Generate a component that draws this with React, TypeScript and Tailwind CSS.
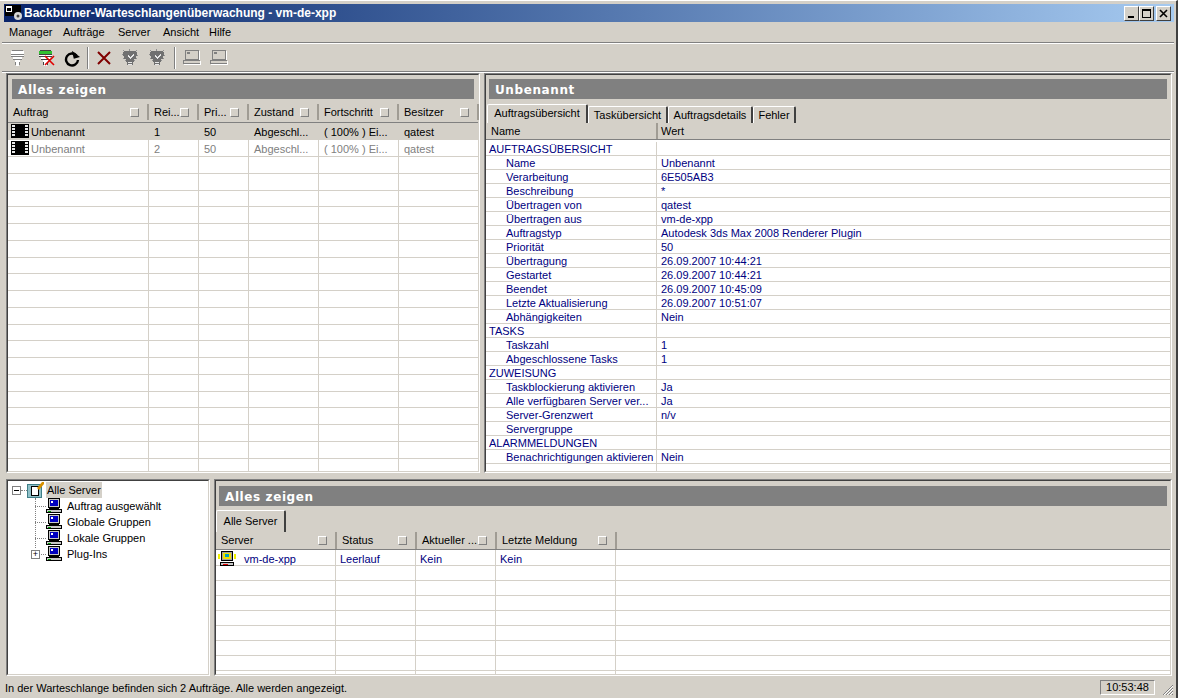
const font = "font-['Liberation_Sans',Arial,sans-serif]";

const menus = ["Manager", "Aufträge", "Server", "Ansicht", "Hilfe"];

const jobColumns = [
  { label: "Auftrag", width: "w-[141px]" },
  { label: "Rei...", width: "w-[50px]" },
  { label: "Pri...", width: "w-[50px]" },
  { label: "Zustand", width: "w-[70px]" },
  { label: "Fortschritt", width: "w-[80px]" },
  { label: "Besitzer", width: "w-[80px]" },
];

const jobs = [
  { cells: ["Unbenannt", "1", "50", "Abgeschl...", "( 100% ) Ei...", "qatest"], active: true },
  { cells: ["Unbenannt", "2", "50", "Abgeschl...", "( 100% ) Ei...", "qatest"], active: false },
];

const detailRows: [string, string, boolean][] = [
  ["AUFTRAGSÜBERSICHT", "", true],
  ["Name", "Unbenannt", false],
  ["Verarbeitung", "6E505AB3", false],
  ["Beschreibung", "*", false],
  ["Übertragen von", "qatest", false],
  ["Übertragen aus", "vm-de-xpp", false],
  ["Auftragstyp", "Autodesk 3ds Max 2008 Renderer Plugin", false],
  ["Priorität", "50", false],
  ["Übertragung", "26.09.2007 10:44:21", false],
  ["Gestartet", "26.09.2007 10:44:21", false],
  ["Beendet", "26.09.2007 10:45:09", false],
  ["Letzte Aktualisierung", "26.09.2007 10:51:07", false],
  ["Abhängigkeiten", "Nein", false],
  ["TASKS", "", true],
  ["Taskzahl", "1", false],
  ["Abgeschlossene Tasks", "1", false],
  ["ZUWEISUNG", "", true],
  ["Taskblockierung aktivieren", "Ja", false],
  ["Alle verfügbaren Server ver...", "Ja", false],
  ["Server-Grenzwert", "n/v", false],
  ["Servergruppe", "", false],
  ["ALARMMELDUNGEN", "", true],
  ["Benachrichtigungen aktivieren", "Nein", false],
  ["", "", false],
];

const serverColumns = [
  { label: "Server", width: "w-[121px]" },
  { label: "Status", width: "w-[80px]" },
  { label: "Aktueller ...", width: "w-[80px]" },
  { label: "Letzte Meldung", width: "w-[120px]" },
];

function FilmIcon() {
  return (
    <svg width="18" height="14" viewBox="0 0 18 14" shapeRendering="crispEdges" className="shrink-0">
      <rect width="18" height="14" fill="#000" />
      {[1, 4, 7, 10].map((y) => (
        <g key={y} fill="#e8e8e8">
          <rect x="1" y={y} width="3" height="2" />
          <rect x="14" y={y} width="3" height="2" />
        </g>
      ))}
    </svg>
  );
}

function ComputerIcon({ screen = "#0000c0", body = "#c8c8c8" }: { screen?: string; body?: string }) {
  return (
    <svg width="16" height="16" viewBox="0 0 16 16" shapeRendering="crispEdges" className="shrink-0">
      <rect x="2" y="0" width="12" height="10" fill="#000" />
      <rect x="3" y="1" width="10" height="8" fill={body} />
      <rect x="4" y="2" width="8" height="6" fill={screen} />
      <rect x="5" y="3" width="2" height="2" fill="#fff" />
      <rect x="3" y="10" width="10" height="1" fill="#000" />
      <rect x="0" y="11" width="16" height="4" fill="#000" />
      <rect x="1" y="12" width="14" height="2" fill={body} />
      <rect x="2" y="13" width="3" height="1" fill="#00a000" />
    </svg>
  );
}

function ServerIcon() {
  return (
    <svg width="18" height="15" viewBox="0 0 18 15" shapeRendering="crispEdges" className="shrink-0 mt-[2px]">
      <rect x="0" y="3" width="2" height="5" fill="#f0f000" />
      <rect x="16" y="3" width="2" height="5" fill="#f0f000" />
      <rect x="3" y="0" width="12" height="10" fill="#000" />
      <rect x="4" y="1" width="10" height="8" fill="#a0a0a0" />
      <rect x="5" y="2" width="8" height="6" fill="#f0e000" />
      <rect x="7" y="3" width="4" height="3" fill="#00a0c0" />
      <rect x="2" y="11" width="14" height="4" fill="#000" />
      <rect x="3" y="12" width="12" height="2" fill="#c8c8c8" />
      <rect x="5" y="13" width="5" height="1" fill="#e00000" />
    </svg>
  );
}

function FunnelIcon({ active }: { active?: boolean }) {
  const dark = active ? "#404040" : "#808080";
  return (
    <svg width="18" height="18" viewBox="0 0 18 18" shapeRendering="crispEdges">
      <rect x="3" y="1" width="11" height="1" fill={dark} />
      <rect x="2" y="2" width="13" height="3" fill={active ? "#30c030" : "#fff"} />
      <rect x="2" y="5" width="13" height="1" fill={dark} />
      <rect x="2" y="6" width="13" height="1" fill="#fff" />
      <rect x="2" y="7" width="13" height="1" fill={dark} />
      <rect x="4" y="8" width="9" height="2" fill="#fff" />
      <rect x="4" y="10" width="9" height="1" fill={dark} />
      <rect x="6" y="11" width="5" height="2" fill="#fff" />
      <rect x="7" y="13" width="3" height="4" fill="#fff" />
      <rect x="6" y="13" width="1" height="3" fill={dark} />
      <rect x="10" y="13" width="1" height="3" fill={dark} />
      {active && <path d="M8 7l9 9M17 7l-9 9" stroke="#e00000" strokeWidth="1.6" shapeRendering="auto" />}
    </svg>
  );
}

function RefreshIcon() {
  return (
    <svg width="16" height="18" viewBox="0 0 16 18" fill="none">
      <path d="M12.5 6.5A6 6 0 1 0 14 11" stroke="#000" strokeWidth="2.4" />
      <path d="M9 1v8h6.5z" fill="#000" transform="rotate(-14 12 6)" />
    </svg>
  );
}

function DeleteIcon() {
  return (
    <svg width="14" height="14" viewBox="0 0 14 14">
      <path d="M1 1l12 12M13 1L1 13" stroke="#800000" strokeWidth="2" />
    </svg>
  );
}

function BulbIcon() {
  return (
    <svg width="16" height="18" viewBox="0 0 16 18" shapeRendering="crispEdges">
      <path d="M2 2h12v1h1v4h-1v3h-2v3h-1v3H5v-3H4v-3H2V7H1V3h1z" fill="#707070" />
      <path d="M1 1h1v1H1zM7 0h1v2H7zM14 1h1v1h-1zM0 5h1v1H0zM15 6h1v1h-1zM1 9h1v1H1zM14 9h1v1h-1zM3 11h1v1H3zM12 11h1v1h-1z" fill="#909090" />
      <path d="M6 8h1v1h1v1h1V9h1V8h1V7h1V5h-1v1h-1v1H9v1H8V7H7V6H6z" fill="#e8e8e8" />
      <path d="M6 13h4v1H6zM6 15h4v1H6z" fill="#e8e8e8" />
    </svg>
  );
}

function LaptopIcon() {
  return (
    <svg width="18" height="16" viewBox="0 0 18 16" shapeRendering="crispEdges">
      <rect x="2" y="0" width="14" height="10" fill="#808080" />
      <rect x="3" y="1" width="12" height="8" fill="#d4d0c8" />
      <rect x="4" y="2" width="3" height="2" fill="#808080" />
      <rect x="16" y="1" width="1" height="10" fill="#fff" />
      <rect x="0" y="10" width="17" height="1" fill="#808080" />
      <rect x="0" y="11" width="1" height="3" fill="#808080" />
      <rect x="1" y="13" width="16" height="1" fill="#808080" />
      <rect x="1" y="14" width="17" height="1" fill="#fff" />
      <rect x="17" y="11" width="1" height="3" fill="#fff" />
    </svg>
  );
}

function TreeRootIcon() {
  return (
    <svg width="17" height="16" viewBox="0 0 17 16" shapeRendering="crispEdges" className="shrink-0">
      <rect x="0" y="2" width="15" height="14" fill="#3f7f88" />
      <rect x="1" y="3" width="13" height="12" fill="#8fc0c8" />
      <rect x="4" y="4" width="8" height="10" fill="#000" />
      <rect x="5" y="5" width="6" height="8" fill="#fff" />
      <path d="M10 6l5-6h2v2l-5 6z" fill="#d89000" shapeRendering="auto" />
    </svg>
  );
}

function SortBox() {
  return (
    <span className="size-[9px] shrink-0 bg-[#d4d0c8] border-t border-l border-t-white border-l-white border-b border-r border-b-[#808080] border-r-[#808080]" />
  );
}

function HeaderCell({ label, width }: { label: string; width: string }) {
  return (
    <div className={`${width} h-full shrink-0 flex items-center justify-between pl-[5px] pr-[8px] border-r-2 border-r-[#a09c94]`}>
      <span className="whitespace-nowrap">{label}</span>
      <SortBox />
    </div>
  );
}

function TitleBar({ text }: { text: string }) {
  return (
    <div className="h-[20px] shrink-0 bg-[#808080] flex items-center pl-[6px] pt-[1px] text-white font-bold text-[12px] tracking-[0.6px] font-['DejaVu_Sans',sans-serif]">
      {text}
    </div>
  );
}

function Panel({ className, children }: { className: string; children: React.ReactNode }) {
  return (
    <div className={`${className} flex flex-col border-t border-l border-t-[#808080] border-l-[#808080] border-b border-r border-b-white border-r-white`}>
      <div className="flex-1 min-h-0 flex flex-col border-t border-l border-t-[#404040] border-l-[#404040] border-b border-r border-b-[#d4d0c8] border-r-[#d4d0c8]">
        {children}
      </div>
    </div>
  );
}

function Tab({ label, height, width }: { label: string; height: string; width: string }) {
  return (
    <div
      className={`${width} ${height} shrink-0 flex items-center justify-center bg-[#d4d0c8] rounded-t-[2px] border-t border-l border-t-white border-l-white border-r-2 border-r-[#404040]`}
    >
      {label}
    </div>
  );
}

function GridFill({ count, height, cols }: { count: number; height: string; cols: string[] }) {
  return (
    <>
      {Array.from({ length: count }).map((_, i) => (
        <div key={i} className={`flex ${height} shrink-0 border-b border-b-[#d4d0c8]`}>
          {cols.map((w, j) => (
            <div key={j} className={`${w} shrink-0 border-r border-r-[#d4d0c8]`} />
          ))}
        </div>
      ))}
    </>
  );
}

function TreeItem({ label, plus }: { label: string; plus?: boolean }) {
  return (
    <div className="h-[16px] flex items-center pl-[38px] relative">
      <span className="absolute left-[27px] top-[8px] w-[11px] border-t border-dotted border-t-[#808080]" />
      {plus && (
        <span className="absolute left-[23px] top-[4px] size-[9px] bg-white border border-[#808080] flex items-center justify-center text-[9px] leading-none text-black">
          +
        </span>
      )}
      <ComputerIcon />
      <span className="ml-[5px] text-black">{label}</span>
    </div>
  );
}

export default function App() {
  const jobWidths = ["w-[141px]", "w-[50px]", "w-[50px]", "w-[70px]", "w-[80px]", "w-[80px]"];
  const serverWidths = ["w-[120px]", "w-[80px]", "w-[80px]", "w-[120px]"];

  return (
    <div className={`${font} w-[1178px] h-[698px] overflow-hidden bg-[#d4d0c8] text-[11px] text-black flex flex-col border-r-2 border-r-[#404040] border-t border-t-white`}>
      {/* Window title */}
      <div className="mt-[3px] mx-[4px] mr-[2px] h-[18px] shrink-0 flex items-center bg-gradient-to-r from-[#0a246a] to-[#a6caf0]">
        <svg width="18" height="16" viewBox="0 0 18 16" shapeRendering="crispEdges" className="ml-[1px]">
          <rect x="0" y="0" width="16" height="11" fill="#000" />
          <rect x="1" y="1" width="6" height="6" fill="#fff" />
          <rect x="2" y="3" width="4" height="3" fill="#000" />
          <circle cx="13" cy="11" r="4" fill="#d8d8d8" shapeRendering="auto" />
          <circle cx="13" cy="11" r="1.5" fill="#404040" shapeRendering="auto" />
        </svg>
        <span className="ml-[1px] text-white font-bold text-[12px] font-['Liberation_Sans',sans-serif]">
          Backburner-Warteschlangenüberwachung - vm-de-xpp
        </span>
        <div className="ml-auto mr-[3px] flex gap-0">
          {["min", "max"].map((b) => (
            <button key={b} className="size-[15px] bg-[#d4d0c8] border-t border-l border-t-white border-l-white border-b border-r border-b-[#404040] border-r-[#404040] flex items-center justify-center">
              {b === "min" ? (
                <span className="w-[6px] h-[2px] bg-black mt-[7px] -ml-[2px]" />
              ) : (
                <span className="w-[9px] h-[9px] border border-black border-t-2" />
              )}
            </button>
          ))}
          <button className="ml-[2px] size-[15px] bg-[#d4d0c8] border-t border-l border-t-white border-l-white border-b border-r border-b-[#404040] border-r-[#404040] flex items-center justify-center">
            <svg width="9" height="9" viewBox="0 0 9 9">
              <path d="M1 1l7 7M8 1L1 8" stroke="#000" strokeWidth="1.6" />
            </svg>
          </button>
        </div>
      </div>

      {/* Menu */}
      <div className="h-[20px] shrink-0 flex items-center mx-[4px] mr-[2px]">
        {menus.map((m, i) => (
          <span key={m} className={["ml-[5px] w-[54px]", "w-[55px]", "w-[45px]", "w-[46px]", ""][i]}>
            {m}
          </span>
        ))}
      </div>
      <div className="h-[2px] shrink-0 mx-[2px] border-t border-t-[#808080] border-b border-b-white" />

      {/* Toolbar */}
      <div className="h-[27px] shrink-0 flex items-center pl-[9px]">
        <span className="w-[28px]"><FunnelIcon /></span>
        <span className="w-[27px]"><FunnelIcon active /></span>
        <span className="w-[23px]"><RefreshIcon /></span>
        <span className="w-[1px] h-[22px] bg-[#808080] border-r border-r-white box-content" />
        <span className="w-[25px] ml-[8px]"><DeleteIcon /></span>
        <span className="w-[27px]"><BulbIcon /></span>
        <span className="w-[25px]"><BulbIcon /></span>
        <span className="w-[1px] h-[22px] bg-[#808080] border-r border-r-white box-content" />
        <span className="w-[27px] ml-[7px]"><LaptopIcon /></span>
        <span className="w-[27px]"><LaptopIcon /></span>
      </div>
      <div className="h-[2px] shrink-0 mx-[2px] border-t border-t-[#808080] border-b border-b-white" />

      {/* Upper split */}
      <div className="h-[400px] shrink-0 flex gap-[4px] pl-[6px] pr-[4px]">
        <Panel className="w-[474px]">
          <div className="flex-1 min-h-0 flex flex-col">
            <div className="px-[4px] pt-[4px] pb-[5px] shrink-0">
              <TitleBar text="Alles zeigen" />
            </div>
            <div className="h-[19px] pb-[2px] shrink-0 flex items-center bg-[#d4d0c8] border-b border-b-[#808080]">
              {jobColumns.map((c) => (
                <HeaderCell key={c.label} {...c} />
              ))}
            </div>
            <div className="flex-1 min-h-0 overflow-hidden bg-white">
              {jobs.map((job, i) => (
                <div key={i} className={`flex h-[17px] shrink-0 items-center border-b border-b-[#d4d0c8] ${job.active ? "bg-[#d4d0c8] text-black" : "text-[#808080]"}`}>
                  {job.cells.map((cell, j) => (
                    <div key={j} className={`${jobColumns[j].width} h-full shrink-0 flex items-center whitespace-nowrap border-r border-r-[#d4d0c8] ${j === 0 ? "pl-[3px]" : "pl-[5px]"}`}>
                      {j === 0 && (
                        <span className="mr-[2px]">
                          <FilmIcon />
                        </span>
                      )}
                      <span className="mt-[2px]">{cell}</span>
                    </div>
                  ))}
                </div>
              ))}
              <GridFill count={20} height="h-[16.75px]" cols={jobWidths} />
            </div>
          </div>
        </Panel>

        <Panel className="flex-1 min-w-0">
          <div className="flex-1 min-h-0 flex flex-col">
            <div className="px-[3px] pt-[4px] pb-[3px] shrink-0">
              <TitleBar text="Unbenannt" />
            </div>
            <div className="h-[21px] shrink-0 flex items-end pl-[1px]">
              <Tab label="Auftragsübersicht" height="h-[19px] pb-[1px]" width="w-[101px]" />
              <Tab label="Taskübersicht" height="h-[17px]" width="w-[80px]" />
              <Tab label="Auftragsdetails" height="h-[17px]" width="w-[85px]" />
              <Tab label="Fehler" height="h-[17px]" width="w-[43px]" />
            </div>
            <div className="h-[17px] shrink-0 flex items-center border-b border-b-[#808080]">
              <div className="w-[172px] h-full flex items-center pl-[5px] border-r-2 border-r-[#a09c94]">Name</div>
              <div className="pl-[3px]">Wert</div>
            </div>
            <div className="flex-1 min-h-0 overflow-hidden bg-white text-[#000080] pt-[2px]">
              {detailRows.map(([name, value, section], i) => (
                <div key={i} className="flex h-[14px] items-center border-b border-b-[#d4d0c8]">
                  <div className={`w-[171px] h-full shrink-0 flex items-center whitespace-nowrap border-r border-r-[#d4d0c8] ${section ? "pl-[3px]" : "pl-[20px]"}`}>
                    <span className="mt-[2px]">{name}</span>
                  </div>
                  <div className="pl-[4px] mt-[2px] whitespace-nowrap">{value}</div>
                </div>
              ))}
            </div>
          </div>
        </Panel>
      </div>

      {/* Lower split */}
      <div className="h-[197px] shrink-0 mt-[6px] flex gap-[4px] pl-[6px] pr-[4px]">
        <Panel className="w-[204px]">
          <div className="flex-1 min-h-0 bg-white pt-[1px] relative">
            <div className="h-[16px] flex items-center pl-[19px] relative">
              <span className="absolute left-[4px] top-[4px] size-[9px] bg-white border border-[#808080] flex items-center justify-center">
                <span className="w-[5px] h-[1px] bg-black" />
              </span>
              <span className="absolute left-[13px] top-[8px] w-[6px] border-t border-dotted border-t-[#808080]" />
              <TreeRootIcon />
              <span className="ml-[2px] bg-[#d4d0c8] h-[16px] px-[1px] flex items-center">Alle Server</span>
            </div>
            <span className="absolute left-[27px] top-[17px] h-[50px] border-l border-dotted border-l-[#808080]" />
            <TreeItem label="Auftrag ausgewählt" />
            <TreeItem label="Globale Gruppen" />
            <TreeItem label="Lokale Gruppen" />
            <TreeItem label="Plug-Ins" plus />
          </div>
        </Panel>

        <Panel className="flex-1 min-w-0">
          <div className="flex-1 min-h-0 flex flex-col">
            <div className="px-[3px] pt-[5px] pb-[3px] shrink-0">
              <TitleBar text="Alles zeigen" />
            </div>
            <div className="h-[23px] shrink-0 flex items-end">
              <Tab label="Alle Server" height="h-[22px] pb-[1px]" width="w-[70px]" />
            </div>
            <div className="h-[18px] shrink-0 flex items-center border-b border-b-[#808080]">
              {serverColumns.map((c) => (
                <HeaderCell key={c.label} {...c} />
              ))}
            </div>
            <div className="flex-1 min-h-0 overflow-hidden bg-white">
              <div className="flex h-[16px] items-center border-b border-b-[#d4d0c8] text-[#000080]">
                <div className="w-[120px] h-full shrink-0 flex items-center pl-[2px] border-r border-r-[#d4d0c8]">
                  <ServerIcon />
                  <span className="ml-[8px] mt-[3px]">vm-de-xpp</span>
                </div>
                <div className="w-[80px] h-full shrink-0 flex items-center pl-[4px] border-r border-r-[#d4d0c8]"><span className="mt-[3px]">Leerlauf</span></div>
                <div className="w-[80px] h-full shrink-0 flex items-center pl-[4px] border-r border-r-[#d4d0c8]"><span className="mt-[3px]">Kein</span></div>
                <div className="w-[120px] h-full shrink-0 flex items-center pl-[4px] border-r border-r-[#d4d0c8]"><span className="mt-[3px]">Kein</span></div>
              </div>
              <GridFill count={8} height="h-[15px]" cols={serverWidths} />
            </div>
          </div>
        </Panel>
      </div>

      {/* Status bar */}
      <div className="flex-1 min-h-0 flex items-center pl-[5px] pr-[3px] relative">
        <span className="mt-[2px]">In der Warteschlange befinden sich 2 Aufträge. Alle werden angezeigt.</span>
        <div className="ml-auto mr-[18px] w-[55px] h-[15px] flex items-center justify-center border-t border-l border-t-[#808080] border-l-[#808080] border-b border-r border-b-white border-r-white">
          10:53:48
        </div>
        <svg width="13" height="13" viewBox="0 0 13 13" className="absolute right-[2px] bottom-[2px]">
          <path d="M12 2L2 12M12 5L5 12M12 8l-4 4M12 11l-1 1" stroke="#808080" strokeWidth="1" />
          <path d="M12 3L3 12M12 6L6 12M12 9l-3 3" stroke="#fff" strokeWidth="1" />
        </svg>
      </div>
    </div>
  );
}
